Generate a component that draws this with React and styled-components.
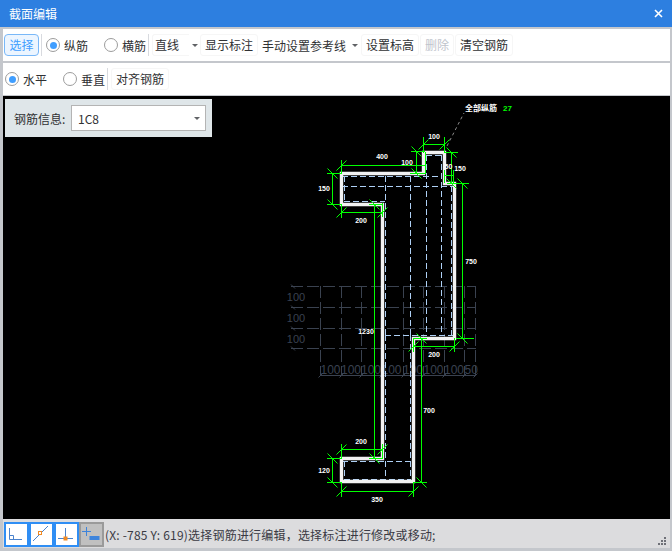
import React from "react";
import styled, { createGlobalStyle } from "styled-components";

const Global = createGlobalStyle`
  html, body { margin: 0; padding: 0; background: #c4c7cc; }
  body { font-family: "Noto Sans CJK SC", "Liberation Sans", sans-serif; font-size: 12px; color: #303133; }
`;

const Win = styled.div`
  width: 672px; height: 551px; display: flex; flex-direction: column; background: #c4c7cc; overflow: hidden;
`;
const TitleBar = styled.div`
  height: 27px; flex: none; background: #2d7fe0; color: #fff; display: flex; align-items: center;
  justify-content: space-between; padding: 0 9px 0 9px; font-size: 12px; margin-bottom: 2px;
`;
const Body = styled.div`
  flex: 1; min-height: 0; display: flex; flex-direction: column; margin: 0 2px 0 3px;
`;
const Toolbar = styled.div`
  height: 32px; flex: none; background: #fff; display: flex; align-items: center; padding-left: ${p => p.$pad}px;
  margin-bottom: ${p => p.$mb}px; box-sizing: border-box;
`;
const Btn = styled.div`
  height: 22px; box-sizing: border-box; padding: 0 4px; line-height: 20px; border: 1px solid #f6f6f6; border-radius: 3px;
  white-space: nowrap; flex: none; margin-left: ${p => p.$ml || 0}px;
  color: ${p => p.$disabled ? "#c0c4cc" : "#303133"};
`;
const Primary = styled(Btn)`
  width: 35px; padding: 0; text-align: center; border: 1px solid #79b8f8; background: #ecf5ff; color: #409eff; border-radius: 4px;
`;
const Sep = styled.div`
  width: 1px; height: 22px; background: #d8dadf; flex: none; margin-left: ${p => p.$ml}px; margin-right: ${p => p.$mr}px;
`;
const RadioLabel = styled.div`
  display: flex; align-items: center; gap: 4px; flex: none; margin-left: ${p => p.$ml || 0}px; white-space: nowrap;
`;
const RadioDot = styled.span`
  width: 14px; height: 14px; box-sizing: border-box; border-radius: 50%; border: 1px solid #9c9c9c; background: #fff;
  display: flex; align-items: center; justify-content: center;
  &::after { content: ""; width: 7px; height: 7px; border-radius: 50%; background: ${p => p.$on ? "#409eff" : "transparent"}; }
`;
const Arrow = styled.span`
  width: 0; height: 0; border-left: 3px solid transparent; border-right: 3px solid transparent; border-top: 3px solid #606266;
  flex: none; margin-left: ${p => p.$ml || 0}px;
`;
const DropText = styled.div`
  display: flex; align-items: center; flex: none; white-space: nowrap; margin-left: ${p => p.$ml || 0}px;
`;
const LineSelect = styled(Btn)`
  width: 37px; border-right: 0; border-radius: 3px 0 0 3px; padding: 0 2px;
`;
const Canvas = styled.div`
  flex: 1; min-height: 0; position: relative; background: #000; margin-top: 1px;
  svg { display: block; }
`;
const InfoPanel = styled.div`
  position: absolute; left: 2px; top: 3px; width: 207px; height: 38px; box-sizing: border-box; background: #dfe6e9;
  display: flex; align-items: center; padding-left: 9px;
`;
const InfoLabel = styled.span`
  width: 57px; flex: none;
`;
const InfoInput = styled.div`
  width: 135px; height: 26px; box-sizing: border-box; background: #fff; border: 1px solid #b4b4b4; display: flex;
  align-items: center; justify-content: space-between; padding: 0 5px 0 6px; color: #303133;
`;
const StatusBar = styled.div`
  height: 29px; flex: none; box-sizing: border-box; background: #dcdcde; display: flex; align-items: flex-start;
  margin: 0 0 3px 0; padding: 3px 0 0 1px; position: relative;
`;
const ToolBtn = styled.div`
  width: 25px; height: 25px; box-sizing: border-box; flex: none; border: 2px solid ${p => p.$off ? "#9a9a9a" : "#2f8ef4"};
  background: ${p => p.$off ? "#c0c0c0" : "#fff"}; svg { display: block; }
`;
const StatusText = styled.div`
  font-size: 12px; line-height: 25px; margin-left: 1px; color: #3a3a44; white-space: nowrap; letter-spacing: 0.2px;
`;
const Grip = styled.div`
  position: absolute; right: 4px; bottom: 3px; display: grid; grid-template-columns: repeat(3, 2px); grid-auto-rows: 2px; gap: 1px;
`;
const GripDot = styled.span`
  background: ${p => p.$on ? "#6e7077" : "transparent"};
`;
const CadLabel = styled.text`
  font-family: "Liberation Sans", "Noto Sans CJK SC", sans-serif; font-size: ${p => p.$size || 7}px; font-weight: ${p => p.$w || 700};
  fill: ${p => p.$fill || "#fff"}; text-anchor: ${p => p.$anchor || "middle"};
`;

const shape = "M341.5 173.5H423.5V152.5H444.5V183.5H454.5V338.5H413.5V481.5H341.5V458.5H382.5V204.5H341.5Z";
const dashes = [
  "M342 176.5H442", "M342 186.5H455", "M344 201.5H385", "M344.5 176V202", "M385.5 176V335", "M410.5 176V335", "M426.5 155V335",
  "M441.5 155V335", "M451.5 186V335", "M426 155.5H442", "M385 335.5H454", "M385.5 335V482", "M410.5 335V480",
  "M342 461.5H413", "M344 479.5H411", "M344.5 461V480",
];
const gridH = [286.5, 307.5, 328.5, 348.5];
const gridV = [320.5, 341.5, 361.5, 381.5, 403.5, 423.5, 444.5, 464.5, 475.5];
const bottomLabels = [[320.5, "100"], [341, "100"], [361, "100"], [381.5, "100"], [403, "100"], [423.5, "100"], [444, "100"], [464.5, "50"]];
const green = [
  "M341.5 165.5H425.5", "M341.5 160V174", "M425.5 152V174", "M416.5 152V173", "M411 151.5H425", "M410 173.5H425",
  "M423.5 144.5H444.5", "M423.5 137V153", "M444.5 137V153", "M444 152.5H458", "M451.5 152V183", "M444 175.5H454", "M444.5 170V183", "M453.5 170V184",
  "M447 183.5H469", "M462.5 183V338", "M456 338.5H474",
  "M332.5 173V204", "M327 173.5H342", "M327 204.5H342",
  "M341.5 212.5H382.5", "M341.5 205V218", "M382.5 203V217",
  "M374.5 204V458", "M369 204.5H383", "M369 458.5H383",
  "M413.5 346.5H454.5", "M413.5 338V352", "M454.5 338V352",
  "M421.5 338V482", "M413 338.5H427", "M413 482.5H427",
  "M341.5 449.5H382.5", "M341.5 444V458", "M382.5 444V458",
  "M332.5 458V482", "M327 458.5H342", "M327 482.5H342",
  "M341.5 491.5H413.5", "M341.5 482V497", "M413.5 482V497",
];
const tickUp = [[341.5, 165.5], [423.5, 144.5], [444.5, 144.5], [341.5, 212.5], [382.5, 212.5], [413.5, 346.5], [454.5, 346.5], [341.5, 449.5], [382.5, 449.5], [341.5, 491.5], [413.5, 491.5]];
const tickDown = [[332.5, 173.5], [332.5, 204.5], [374.5, 204.5], [374.5, 458.5], [416.5, 151.5], [416.5, 173.5], [451.5, 152.5], [451.5, 183.5], [462.5, 183.5], [462.5, 338.5], [421.5, 338.5], [421.5, 482.5], [332.5, 458.5], [332.5, 482.5]];
const labels = [
  [434, 139, "100"], [382, 159, "400"], [407, 165, "100"], [324, 191, "150"], [361, 223, "200"], [448.5, 169, "50"], [460, 171, "150"],
  [471, 264, "750"], [366, 334, "1230"], [434, 357, "200"], [429, 413, "700"], [361, 444, "200"], [324, 473, "120"], [377, 502, "350"],
];

function Drawing() {
  return (
    <svg width="667" height="423" viewBox="3 96 667 423">
      <g stroke="#3a4250" strokeWidth="1" fill="none" strokeDasharray="12 4" shapeRendering="crispEdges">
        {gridH.map(y => <path key={y} d={`M291 ${y}H476`} />)}
        {gridV.map(x => <path key={x} d={`M${x} 286V375`} />)}
      </g>
      <g stroke="#3a4250" strokeWidth="1" fill="none">
        <path d="M320 375.5H476" />
        {gridV.map(x => <path key={x} d={`M${x - 2} 377.5l4 -4`} />)}
        {gridH.map(y => <path key={y} d={`M291 ${y - 2}l4 4`} />)}
      </g>
      {[[297, "100"], [318, "100"], [339, "100"]].map(([y, t]) => (
        <CadLabel key={y} x="296" y={y + 4} $size={11} $w={400} $fill="#3a4250">{t}</CadLabel>
      ))}
      {bottomLabels.map(([x, t]) => (
        <CadLabel key={x} x={x} y="374" $size={12} $w={400} $anchor="start" $fill="#3a4250">{t}</CadLabel>
      ))}
      <g stroke="#aed0f5" strokeWidth="1" fill="none" strokeDasharray="6 3" shapeRendering="crispEdges">
        {dashes.map(d => <path key={d} d={d} />)}
      </g>
      <path d={shape} fill="none" stroke="#f2f2f2" strokeWidth="3.4" strokeLinejoin="miter" />
      <g stroke="#00ff00" strokeWidth="1" fill="none">
        {green.map(d => <path key={d} d={d} shapeRendering="crispEdges" />)}
        {tickUp.map(([x, y]) => <path key={`${x}-${y}`} d={`M${x - 5} ${y + 5}L${x + 5} ${y - 5}`} />)}
        {tickDown.map(([x, y]) => <path key={`${x}-${y}`} d={`M${x - 5} ${y - 5}L${x + 5} ${y + 5}`} />)}
      </g>
      <path d="M447 146L464 113" stroke="#8a8a8a" strokeWidth="1" strokeDasharray="3 3" fill="none" />
      {labels.map(([x, y, t]) => <CadLabel key={`${x}-${y}`} x={x} y={y}>{t}</CadLabel>)}
      <CadLabel x="465" y="111" $size={8} $anchor="start">全部纵筋</CadLabel>
      <CadLabel x="503" y="111" $size={8} $anchor="start" $fill="#00ff00">27</CadLabel>
    </svg>
  );
}

function CloseIcon() {
  return (
    <svg width="9" height="9" viewBox="0 0 9 9" style={{ display: "block" }}>
      <path d="M1 1L8 8M8 1L1 8" stroke="#fff" strokeWidth="1.6" />
    </svg>
  );
}

function PerpIcon() {
  return (
    <svg width="21" height="21" viewBox="0 0 21 21" fill="none">
      <path d="M3.5 4V15.5H16M3.5 11.5H7.5V15.5" stroke="#4a82cc" />
    </svg>
  );
}
function MidIcon() {
  return (
    <svg width="21" height="21" viewBox="0 0 21 21" fill="none">
      <path d="M2 17L17 2" stroke="#4a82cc" />
      <rect x="7.5" y="7.5" width="3" height="3" fill="#fff" stroke="#f08a24" />
    </svg>
  );
}
function CrossIcon() {
  return (
    <svg width="21" height="21" viewBox="0 0 21 21" fill="none">
      <path d="M9.5 4V15M2 14.5H17" stroke="#4a82cc" />
      <rect x="7.5" y="12.5" width="4" height="4" fill="#f08a24" />
    </svg>
  );
}
function AddIcon() {
  return (
    <svg width="21" height="21" viewBox="0 0 21 21" fill="none">
      <path d="M5.5 3V12M1 7.5H10" stroke="#3d84dc" />
      <rect x="8.5" y="12" width="10" height="4" fill="#3d84dc" />
    </svg>
  );
}

export default function App() {
  return (
    <Win>
      <Global />
      <TitleBar>
        <span>截面编辑</span>
        <CloseIcon />
      </TitleBar>
      <Body>
        <Toolbar $mb={2} $pad={1}>
          <Primary>选择</Primary>
          <Sep $ml={2} $mr={4} />
          <RadioLabel>
            <RadioDot $on />
            纵筋
          </RadioLabel>
          <RadioLabel $ml={16}>
            <RadioDot />
            横筋
          </RadioLabel>
          <Sep $ml={2} $mr={3} />
          <LineSelect>直线</LineSelect>
          <Arrow $ml={3} />
          <Btn $ml={2}>显示标注</Btn>
          <DropText $ml={4}>
            手动设置参考线
            <Arrow $ml={6} />
          </DropText>
          <Btn $ml={3}>设置标高</Btn>
          <Btn $ml={1} $disabled>删除</Btn>
          <Btn $ml={1}>清空钢筋</Btn>
        </Toolbar>
        <Toolbar $mb={0} $pad={2}>
          <RadioLabel>
            <RadioDot $on />
            水平
          </RadioLabel>
          <RadioLabel $ml={16}>
            <RadioDot />
            垂直
          </RadioLabel>
          <Sep $ml={2} $mr={3} />
          <Btn>对齐钢筋</Btn>
        </Toolbar>
        <Canvas>
          <Drawing />
          <InfoPanel>
            <InfoLabel>钢筋信息:</InfoLabel>
            <InfoInput>
              1C8
              <Arrow />
            </InfoInput>
          </InfoPanel>
        </Canvas>
        <StatusBar>
          <ToolBtn><PerpIcon /></ToolBtn>
          <ToolBtn><MidIcon /></ToolBtn>
          <ToolBtn><CrossIcon /></ToolBtn>
          <ToolBtn $off><AddIcon /></ToolBtn>
          <StatusText>(X: -785 Y: 619)选择钢筋进行编辑，选择标注进行修改或移动;</StatusText>
          <Grip>
            {[0, 0, 1, 0, 1, 1, 1, 1, 1].map((on, i) => <GripDot key={i} $on={!!on} />)}
          </Grip>
        </StatusBar>
      </Body>
    </Win>
  );
}
